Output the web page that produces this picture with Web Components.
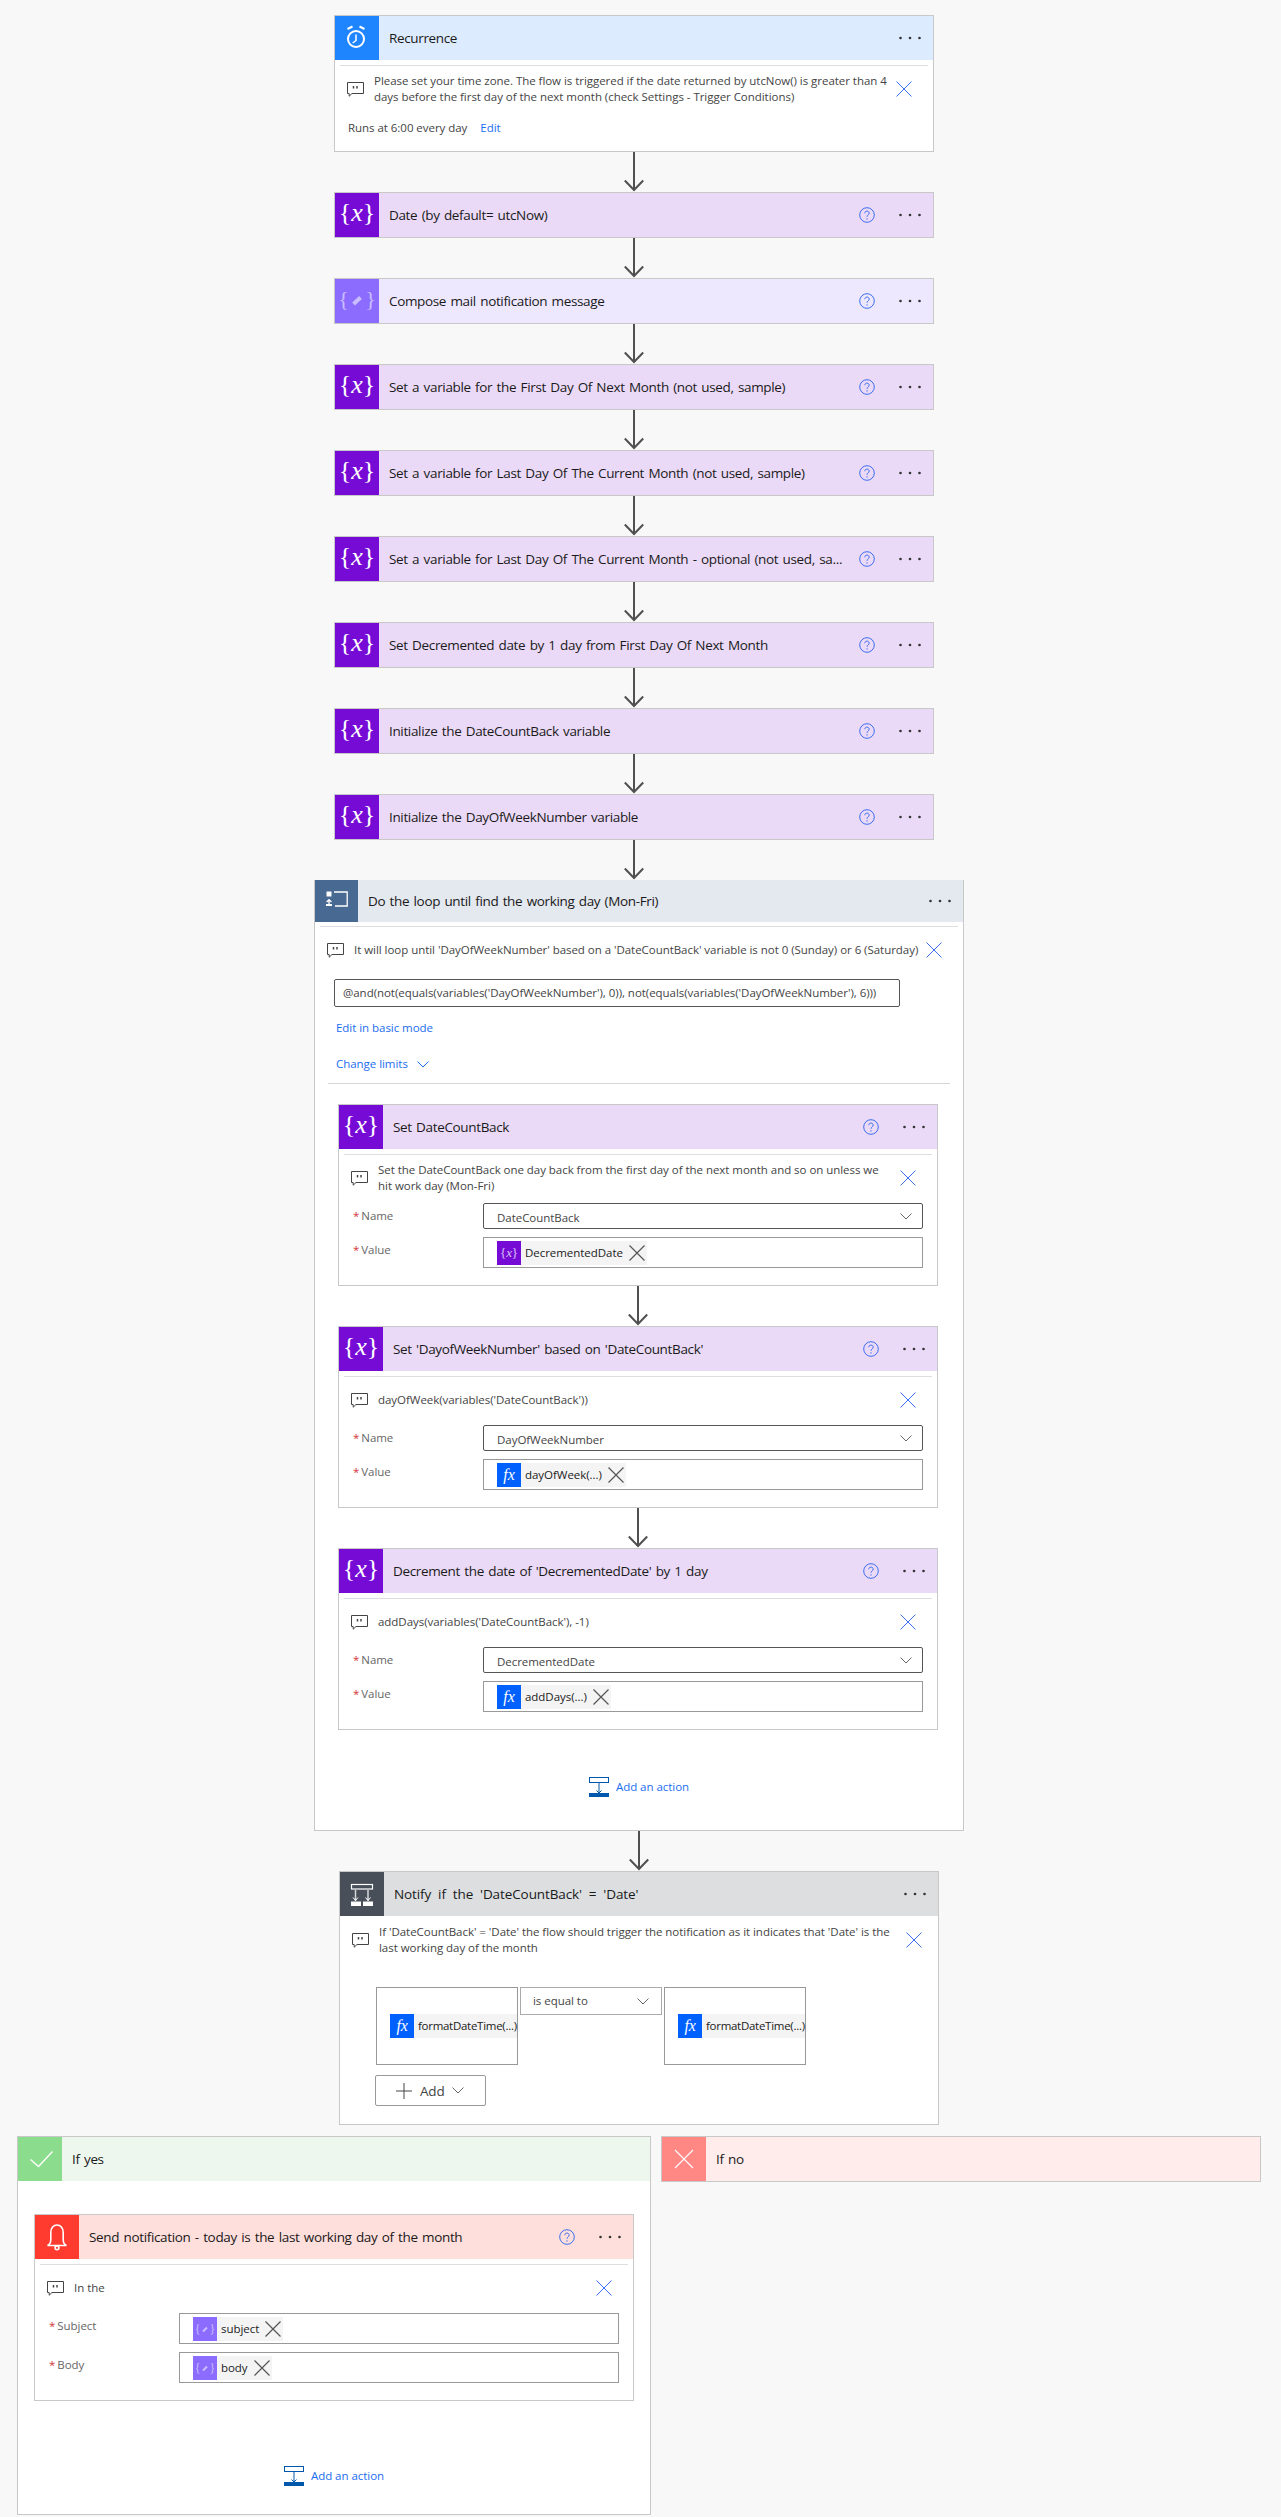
<!DOCTYPE html>
<html>
<head>
<meta charset="utf-8">
<title>Flow</title>
<style>
    html, body { margin: 0; padding: 0; background: #f8f8f8; }
    body { font-family: "Open Sans", "Noto Sans", sans-serif; font-size: 12px; color: #333; }
</style>
</head>
<body>
<flow-canvas>
    <flow-card kind="clock" heading="Recurrence" open no-help>
        <flow-comment>Please set your time zone. The flow is triggered if the date returned by utcNow() is greater than 4<br>days before the first day of the next month (check Settings - Trigger Conditions)</flow-comment>
        <run-note>Runs at 6:00 every day</run-note>
    </flow-card>
    <flow-arrow></flow-arrow>
    <flow-card kind="variable" heading="Date (by default= utcNow)"></flow-card>
    <flow-arrow></flow-arrow>
    <flow-card kind="compose" heading="Compose mail notification message"></flow-card>
    <flow-arrow></flow-arrow>
    <flow-card kind="variable" heading="Set a variable for the First Day Of Next Month (not used, sample)"></flow-card>
    <flow-arrow></flow-arrow>
    <flow-card kind="variable" heading="Set a variable for Last Day Of The Current Month (not used, sample)"></flow-card>
    <flow-arrow></flow-arrow>
    <flow-card kind="variable" heading="Set a variable for Last Day Of The Current Month - optional (not used, sa..."></flow-card>
    <flow-arrow></flow-arrow>
    <flow-card kind="variable" heading="Set Decremented date by 1 day from First Day Of Next Month"></flow-card>
    <flow-arrow></flow-arrow>
    <flow-card kind="variable" heading="Initialize the DateCountBack variable"></flow-card>
    <flow-arrow></flow-arrow>
    <flow-card kind="variable" heading="Initialize the DayOfWeekNumber variable"></flow-card>
    <flow-arrow></flow-arrow>

    <flow-card kind="loop" heading="Do the loop until find the working day (Mon-Fri)" open no-help flush style="--card-width: 650px; margin-left: -20px;">
        <flow-comment>It will loop until 'DayOfWeekNumber' based on a 'DateCountBack' variable is not 0 (Sunday) or 6 (Saturday)</flow-comment>
        <loop-settings>@and(not(equals(variables('DayOfWeekNumber'), 0)), not(equals(variables('DayOfWeekNumber'), 6)))</loop-settings>
        <flow-stack style="margin-left: 23px; --card-width: 600px;">
            <flow-card kind="variable" heading="Set DateCountBack" open>
                <flow-comment>Set the DateCountBack one day back from the first day of the next month and so on unless we<br>hit work day (Mon-Fri)</flow-comment>
                <flow-form>
                    <flow-field label="Name" select>DateCountBack</flow-field>
                    <flow-field label="Value"><flow-token kind="variable">DecrementedDate</flow-token></flow-field>
                </flow-form>
            </flow-card>
            <flow-arrow></flow-arrow>
            <flow-card kind="variable" heading="Set 'DayofWeekNumber' based on 'DateCountBack'" open>
                <flow-comment>dayOfWeek(variables('DateCountBack'))</flow-comment>
                <flow-form>
                    <flow-field label="Name" select>DayOfWeekNumber</flow-field>
                    <flow-field label="Value"><flow-token kind="fx">dayOfWeek(...)</flow-token></flow-field>
                </flow-form>
            </flow-card>
            <flow-arrow></flow-arrow>
            <flow-card kind="variable" heading="Decrement the date of 'DecrementedDate' by 1 day" open>
                <flow-comment>addDays(variables('DateCountBack'), -1)</flow-comment>
                <flow-form>
                    <flow-field label="Name" select>DecrementedDate</flow-field>
                    <flow-field label="Value"><flow-token kind="fx">addDays(...)</flow-token></flow-field>
                </flow-form>
            </flow-card>
        </flow-stack>
        <add-action style="margin: 47px 0 33px;"></add-action>
    </flow-card>

    <flow-arrow style="margin-left: 5px;"></flow-arrow>

    <flow-card kind="condition" heading="Notify if the 'DateCountBack' = 'Date'" no-help style="margin-left: 5px; --title-word: 3.5px; --title-letter: -.1px;">
        <flow-comment style="margin-top: 8px; padding-right: 16px;">If 'DateCountBack' = 'Date' the flow should trigger the notification as it indicates that 'Date' is the<br>last working day of the month</flow-comment>
        <condition-row>
            <flow-token slot="left" kind="fx" clip>formatDateTime(...)</flow-token>
            <flow-token slot="right" kind="fx" clip>formatDateTime(...)</flow-token>
        </condition-row>
    </flow-card>

    <flow-branches>
        <flow-card kind="yes" heading="If yes" no-help no-menu style="--card-width: 634px;">
            <flow-stack style="margin: 33px 0 0 16px; --card-width: 600px;">
                <flow-card kind="notify" heading="Send notification - today is the last working day of the month" open>
                    <flow-comment>In the</flow-comment>
                    <flow-form>
                        <flow-field label="Subject"><flow-token kind="compose">subject</flow-token></flow-field>
                        <flow-field label="Body"><flow-token kind="compose">body</flow-token></flow-field>
                    </flow-form>
                </flow-card>
            </flow-stack>
            <add-action style="margin: 65px 0 28px;"></add-action>
        </flow-card>
        <flow-card kind="no" heading="If no" no-help no-menu></flow-card>
    </flow-branches>
</flow-canvas>

<script>
// Stroke icons shared by the card headers, tokens and rows
const ICONS = {
    clock: `<svg viewBox="0 0 44 44" width="44" height="44" fill="none" stroke="#fff">
        <circle cx="21" cy="23" r="8" stroke-width="2"/>
        <path d="M21 18.500v6l-3.300 2.500" stroke-width="1.500"/>
        <path d="M12.500 13l5-2.500M29.500 13l-5-2.500" stroke-width="2"/>
    </svg>`,
    variable: `<svg viewBox="0 0 44 44" width="44" height="44">
        <text x="22" y="28" text-anchor="middle" fill="#fff" font-family="Liberation Serif, serif" font-size="26">{<tspan font-style="italic">x</tspan>}</text>
    </svg>`,
    compose: `<svg viewBox="0 0 44 44" width="44" height="44" fill="none">
        <text x="22" y="27" text-anchor="middle" fill="#c9bcff" font-family="Liberation Serif, serif" font-size="22" xml:space="preserve">{   }</text>
        <path d="M18.500 25L25.500 18.500" stroke="#c9bcff" stroke-width="4"/>
    </svg>`,
    loop: `<svg viewBox="0 0 44 44" width="44" height="44" fill="none" stroke="#fff">
        <rect x="11.500" y="12.500" width="5" height="5" fill="#fff" stroke="none"/>
        <path d="M19 13h13.200v14H20" stroke-width="1.300"/>
        <rect x="11" y="25" width="6" height="2" fill="#fff" stroke="none"/>
        <path d="M14 26v-5.500M11.600 23l2.400-2.400 2.400 2.400" stroke-width="1.300"/>
    </svg>`,
    condition: `<svg viewBox="0 0 44 44" width="44" height="44" fill="none" stroke="#fff">
        <rect x="11.500" y="12.500" width="21" height="4.500" stroke-width="1.200"/>
        <path d="M15.500 18v11M28 18v11" stroke="#d5d7da" stroke-width="1.500"/>
        <path d="M13 25.500l2.500 3 2.500-3M25.500 25.500l2.500 3 2.500-3" stroke-width="1"/>
        <rect x="11" y="29.500" width="10" height="4.500" fill="#fff" stroke="none"/>
        <rect x="23" y="29.500" width="10" height="4.500" fill="#fff" stroke="none"/>
    </svg>`,
    yes: `<svg viewBox="0 0 44 44" width="44" height="44" fill="none" stroke="#fff" stroke-width="1.300">
        <path d="M12.500 22.500l8 7L34.500 14.500"/>
    </svg>`,
    no: `<svg viewBox="0 0 44 44" width="44" height="44" fill="none" stroke="#fff" stroke-width="1.100">
        <path d="M13 13l18 18M31 13l-18 18"/>
    </svg>`,
    notify: `<svg viewBox="0 0 44 44" width="44" height="44" fill="none" stroke="#fff" stroke-width="1.600">
        <path d="M12.500 30.500c2.500-1 3.300-3 3.300-6v-7c0-4.500 2.700-7.500 6.200-7.500s6.200 3 6.200 7.500v7c0 3 .8 5 3.300 6z"/>
        <circle cx="22" cy="32.800" r="1.900"/>
    </svg>`,
    fx: `<svg viewBox="0 0 24 24" width="24" height="24">
        <text x="12" y="17" text-anchor="middle" fill="#fff" font-family="Liberation Serif, serif" font-style="italic" font-size="16">fx</text>
    </svg>`,
    tokenVariable: `<svg viewBox="0 0 24 24" width="24" height="24">
        <text x="12" y="16" text-anchor="middle" fill="#dcc4f5" font-family="Liberation Serif, serif" font-size="13">{<tspan font-style="italic">x</tspan>}</text>
    </svg>`,
    tokenCompose: `<svg viewBox="0 0 24 24" width="24" height="24" fill="none">
        <text x="12" y="16" text-anchor="middle" fill="#c9bcff" font-family="Liberation Serif, serif" font-size="12" xml:space="preserve">{   }</text>
        <path d="M10 14.500L14 10.500" stroke="#c9bcff" stroke-width="2"/>
    </svg>`,
    help: `<svg viewBox="0 0 16 16" width="16" height="16" fill="none" stroke="#3d6ef0">
        <circle cx="8" cy="8" r="7.300"/>
        <path d="M5.800 6.200c0-1.300 1-2.100 2.200-2.100s2.200.8 2.200 2c0 1.800-2.200 1.800-2.200 3.700" stroke-width="1"/>
        <circle cx="8" cy="11.900" r=".7" fill="#3d6ef0" stroke="none"/>
    </svg>`,
    dots: `<svg viewBox="0 0 22 4" width="22" height="4" fill="#333">
        <circle cx="1.500" cy="2" r="1.300"/><circle cx="11" cy="2" r="1.300"/><circle cx="20.500" cy="2" r="1.300"/>
    </svg>`,
    comment: `<svg viewBox="0 0 17 16" width="17" height="16" fill="none" stroke="#444" stroke-width="1">
        <path d="M.5 1.500h16v11H5l-2.800 2.700v-2.700H.5z"/>
        <path d="M6.500 5v2.500M10 5v2.500" stroke-width="1.500"/>
    </svg>`,
    close: `<svg viewBox="0 0 16 16" width="16" height="16" fill="none" stroke="#3d6ef0" stroke-width="1">
        <path d="M.5.500l15 15M15.500.500l-15 15"/>
    </svg>`,
    remove: `<svg viewBox="0 0 16 16" width="16" height="16" fill="none" stroke="#555" stroke-width="1.200">
        <path d="M.5.500l15 15M15.500.500l-15 15"/>
    </svg>`,
    chevron: `<svg viewBox="0 0 12 7" width="12" height="7" fill="none" stroke="#666" stroke-width="1">
        <path d="M.5.500L6 6l5.500-5.500"/>
    </svg>`,
    chevronBlue: `<svg viewBox="0 0 12 7" width="12" height="7" fill="none" stroke="#1b6df0" stroke-width="1">
        <path d="M.5.500L6 6l5.500-5.500"/>
    </svg>`,
    plus: `<svg viewBox="0 0 16 16" width="16" height="16" fill="none" stroke="#444" stroke-width="1">
        <path d="M8 0v16M0 8h16"/>
    </svg>`,
    addAction: `<svg viewBox="0 0 20 20" width="20" height="20" fill="none" stroke="#0058ad">
        <rect x=".5" y=".5" width="19" height="5"/>
        <path d="M10 6v10M7.500 13.500L10 16l2.500-2.500"/>
        <rect x="0" y="16" width="20" height="4" fill="#0058ad" stroke="none"/>
    </svg>`
};

const KINDS = {
    clock: { color: '#1f85ff', tint: '#ddebff', icon: 'clock' },
    variable: { color: '#770bd6', tint: '#ebdaf7', icon: 'variable' },
    compose: { color: '#8c6cff', tint: '#eee8ff', icon: 'compose' },
    loop: { color: '#486991', tint: '#e4e8ef', icon: 'loop' },
    condition: { color: '#484f58', tint: '#dcdee0', icon: 'condition' },
    yes: { color: '#8bdc8c', tint: '#edf7ee', icon: 'yes' },
    no: { color: '#ff8784', tint: '#ffeceb', icon: 'no' },
    notify: { color: '#ff3b30', tint: '#ffdfdc', icon: 'notify' }
};

const BODY_FONT = `font: 11.500px/16px "Open Sans", "Noto Sans", sans-serif; letter-spacing: -.04px;`;

// Small helper, every element here only renders once
class ShadowElement extends HTMLElement {
    render(html) {
        this.attachShadow({ mode: 'open' }).innerHTML = html;
    }
}

class FlowCanvas extends ShadowElement {
    connectedCallback() {
        this.render(`<style>
            :host { display: block; width: 1281px; height: 2517px; box-sizing: border-box; padding: 15px 0 0 334px; overflow: hidden; }
        </style><slot></slot>`);
    }
}

class FlowStack extends ShadowElement {
    connectedCallback() {
        this.render(`<style>:host { display: block; }</style><slot></slot>`);
    }
}

class FlowArrow extends ShadowElement {
    connectedCallback() {
        this.render(`<style>
            :host { display: flex; justify-content: center; width: 600px; height: 40px; }
            svg { display: block; }
        </style>
        <svg viewBox="0 0 20 40" width="20" height="40" fill="none" stroke="#505050" stroke-width="2">
            <path d="M10 0v38M.8 28.500L10 38l9.200-9.500"/>
        </svg>`);
    }
}

class FlowCard extends ShadowElement {
    connectedCallback() {
        const kind = KINDS[this.getAttribute('kind')];
        const help = this.hasAttribute('no-help') ? '' : `<span class="help">${ICONS.help}</span>`;
        const menu = this.hasAttribute('no-menu') ? '' : `<span class="dots">${ICONS.dots}</span>`;
        const divider = this.hasAttribute('open') ? '<div class="divider"></div>' : '';
        this.render(`<style>
            :host {
                display: block;
                width: var(--card-width, 600px);
                box-sizing: border-box;
                background: #fff;
                border: 1px solid #c8c8c8;
            }
            :host([flush]) { border-top: none; }
            :host([flush]) header { height: 42px; }
            :host([flush]) .divider { margin: 4px 5px 1px; }
            :host([flush]) .icon { width: 43px; }
            header { display: flex; align-items: center; height: 44px; background: ${kind.tint}; }
            .icon { flex: none; width: 44px; height: 100%; display: flex; align-items: center; justify-content: center; background: ${kind.color}; overflow: hidden; }
            svg { display: block; flex: none; }
            h2 {
                flex: 1;
                min-width: 0;
                margin: 0 0 0 10px;
                font: 400 13.500px/20px "Open Sans", "Noto Sans", sans-serif;
                letter-spacing: var(--title-letter, -.35px);
                word-spacing: var(--title-word, 1.2px);
                color: #1a1a1a;
                white-space: nowrap;
            }
            .help { flex: none; margin: 0 24px 0 14px; }
            .dots { flex: none; margin: 0 12px 0 0; }
            :host([no-help]) .dots { margin-left: 14px; }
            .divider { height: 1px; margin: 5px 5px 0; background: #dedede; }
        </style>
        <header>
            <div class="icon">${ICONS[kind.icon]}</div>
            <h2>${this.getAttribute('heading')}</h2>
            ${help}${menu}
        </header>
        ${divider}
        <slot></slot>`);
    }
}

class FlowComment extends ShadowElement {
    connectedCallback() {
        this.render(`<style>
            :host { display: flex; align-items: center; height: 32px; margin: 7px 0 9px; padding: 0 21px 0 12px; }
            .text { flex: 1; margin-left: 10px; ${BODY_FONT} color: #444; white-space: nowrap; }
            svg { display: block; flex: none; }
        </style>
        ${ICONS.comment}
        <div class="text"><slot></slot></div>
        ${ICONS.close}`);
    }
}

class RunNote extends ShadowElement {
    connectedCallback() {
        this.render(`<style>
            :host { display: block; padding: 6px 0 15px 13px; ${BODY_FONT} color: #444; }
            a { margin-left: 13px; color: #1b6df0; }
        </style><slot></slot><a>Edit</a>`);
    }
}

class LoopSettings extends ShadowElement {
    connectedCallback() {
        this.render(`<style>
            :host { display: block; ${BODY_FONT} }
            .box {
                width: 566px;
                height: 28px;
                box-sizing: border-box;
                margin: 13px 0 0 19px;
                padding: 0 8px;
                display: flex;
                align-items: center;
                border: 1px solid #555;
                border-radius: 2px;
                color: #444;
                white-space: nowrap;
            }
            .link { margin: 13px 0 0 21px; color: #1b6df0; }
            .limits { display: flex; align-items: center; gap: 9px; margin-top: 20px; }
            .divider { height: 1px; margin: 11px 13px 20px; background: #d6d6d6; }
        </style>
        <div class="box"><slot></slot></div>
        <div class="link">Edit in basic mode</div>
        <div class="link limits">Change limits ${ICONS.chevronBlue}</div>
        <div class="divider"></div>`);
    }
}

class FlowForm extends ShadowElement {
    connectedCallback() {
        this.render(`<style>
            :host { display: flex; flex-direction: column; gap: 8px; padding: 0 14px 17px; }
        </style><slot></slot>`);
    }
}

class FlowField extends ShadowElement {
    connectedCallback() {
        const select = this.hasAttribute('select');
        this.render(`<style>
            :host { display: flex; ${BODY_FONT} }
            .label { flex: none; width: 130px; padding-top: 5px; color: #666; }
            .label b { font-weight: 400; color: #d13438; margin-right: 2px; }
            .box { flex: 1; box-sizing: border-box; height: 31px; padding: 3px 13px; border: 1px solid #999; display: flex; align-items: flex-start; }
            .box.select { height: 26px; padding-top: 6px; border-color: #555; border-radius: 2px; justify-content: space-between; color: #444; }
            .box.select svg { margin-top: 3px; margin-right: -3px; }
        </style>
        <div class="label"><b>*</b>${this.getAttribute('label')}</div>
        <div class="box ${select ? 'select' : ''}"><span><slot></slot></span>${select ? ICONS.chevron : ''}</div>`);
    }
}

class FlowToken extends ShadowElement {
    connectedCallback() {
        const kind = this.getAttribute('kind');
        const look = {
            variable: ['#770bd6', ICONS.tokenVariable],
            compose: ['#8c6cff', ICONS.tokenCompose],
            fx: ['#0061ff', ICONS.fx]
        }[kind];
        const clip = this.hasAttribute('clip');
        this.render(`<style>
            :host { display: inline-flex; align-items: center; height: 24px; background: #f4f4f4; white-space: nowrap; ${BODY_FONT} color: #222; }
            :host([clip]) { flex: 1; letter-spacing: -.28px; }
            .icon { flex: none; width: 24px; height: 24px; background: ${look[0]}; }
            svg { display: block; flex: none; }
            .text { padding-left: 4px; }
            .remove { margin: 0 2px 0 6px; }
        </style>
        <div class="icon">${look[1]}</div>
        <span class="text"><slot></slot></span>
        ${clip ? '' : `<span class="remove">${ICONS.remove}</span>`}`);
    }
}

class ConditionRow extends ShadowElement {
    connectedCallback() {
        this.render(`<style>
            :host { display: block; padding: 22px 0 18px 35px; ${BODY_FONT} color: #444; }
            .row { display: flex; align-items: flex-start; gap: 2px; margin-left: 1px; }
            .value { width: 142px; height: 78px; box-sizing: border-box; padding-left: 13px; display: flex; align-items: center; border: 1px solid #999; }
            .op { width: 142px; height: 28px; box-sizing: border-box; padding: 0 12px; display: flex; align-items: center; justify-content: space-between; border: 1px solid #aaa; }
            .add { width: 111px; height: 31px; box-sizing: border-box; margin-top: 10px; display: flex; align-items: center; padding-left: 20px; border: 1px solid #999; border-radius: 2px; }
            .add span { margin: 0 8px 0 8px; font-size: 13.500px; letter-spacing: -.2px; }
            svg { display: block; flex: none; }
        </style>
        <div class="row">
            <div class="value"><slot name="left"></slot></div>
            <div class="op">is equal to ${ICONS.chevron}</div>
            <div class="value"><slot name="right"></slot></div>
        </div>
        <div class="add">${ICONS.plus}<span>Add</span>${ICONS.chevron}</div>`);
    }
}

class FlowBranches extends ShadowElement {
    connectedCallback() {
        this.render(`<style>
            :host { display: flex; align-items: flex-start; gap: 10px; margin: 11px 0 0 -317px; }
        </style><slot></slot>`);
    }
}

class AddAction extends ShadowElement {
    connectedCallback() {
        this.render(`<style>
            :host { display: flex; align-items: center; justify-content: center; gap: 7px; height: 20px; ${BODY_FONT} color: #1b6df0; }
            svg { display: block; }
        </style>${ICONS.addAction}<span>Add an action</span>`);
    }
}

customElements.define('flow-canvas', FlowCanvas);
customElements.define('flow-stack', FlowStack);
customElements.define('flow-arrow', FlowArrow);
customElements.define('flow-card', FlowCard);
customElements.define('flow-comment', FlowComment);
customElements.define('run-note', RunNote);
customElements.define('loop-settings', LoopSettings);
customElements.define('flow-form', FlowForm);
customElements.define('flow-field', FlowField);
customElements.define('flow-token', FlowToken);
customElements.define('condition-row', ConditionRow);
customElements.define('flow-branches', FlowBranches);
customElements.define('add-action', AddAction);
</script>
</body>
</html>
